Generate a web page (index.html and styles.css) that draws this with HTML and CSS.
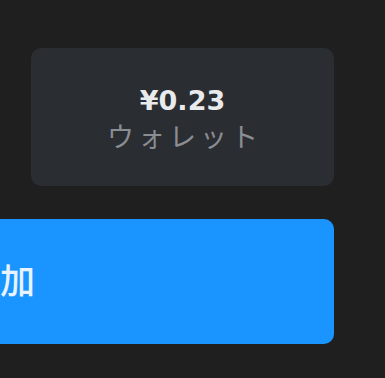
FILE: index.html
```html
<!DOCTYPE html>
<html lang="ja">
<head>
  <meta charset="UTF-8" />
  <meta name="viewport" content="width=device-width, initial-scale=1.0"/>
  <title>ウォレット</title>
  <link rel="stylesheet" href="styles.css">
</head>
<body>
  <main class="panel">
    <div class="wallet">
      <div class="wallet-amount">¥0.23</div>
      <div class="wallet-label">ウォレット</div>
    </div>
    <button class="topup">追加</button>
  </main>
</body>
</html>
```

FILE: styles.css
```css
/* Base */
body { margin:0; background:#1f1f1f; font-family:"DejaVu Sans","Noto Sans CJK JP",sans-serif; overflow:hidden; }
.panel { display:flex; flex-direction:column; width:303px; padding:48px 0 0 31px; gap:33px; }
/* Wallet card */
.wallet { height:138px; background:#2a2d32; border-radius:10px; display:flex; flex-direction:column; align-items:center; justify-content:center; gap:4px; }
.wallet-amount { font-size:27px; font-weight:bold; color:#e9eaec; line-height:1.1; margin-top:4px; }
.wallet-label { font-family:"Noto Sans CJK JP",sans-serif; font-size:27px; letter-spacing:4px; color:#8a8d93; line-height:1.2; padding-left:4px; }
/* Top up button */
.topup { height:125px; margin-left:-231px; background:#1a95ff; color:#e8f3ff; border:none; border-radius:10px; text-align:left; padding:0 0 6px 165px; font-family:"Noto Sans CJK JP",sans-serif; font-size:35px; font-weight:500; cursor:pointer; }
```
